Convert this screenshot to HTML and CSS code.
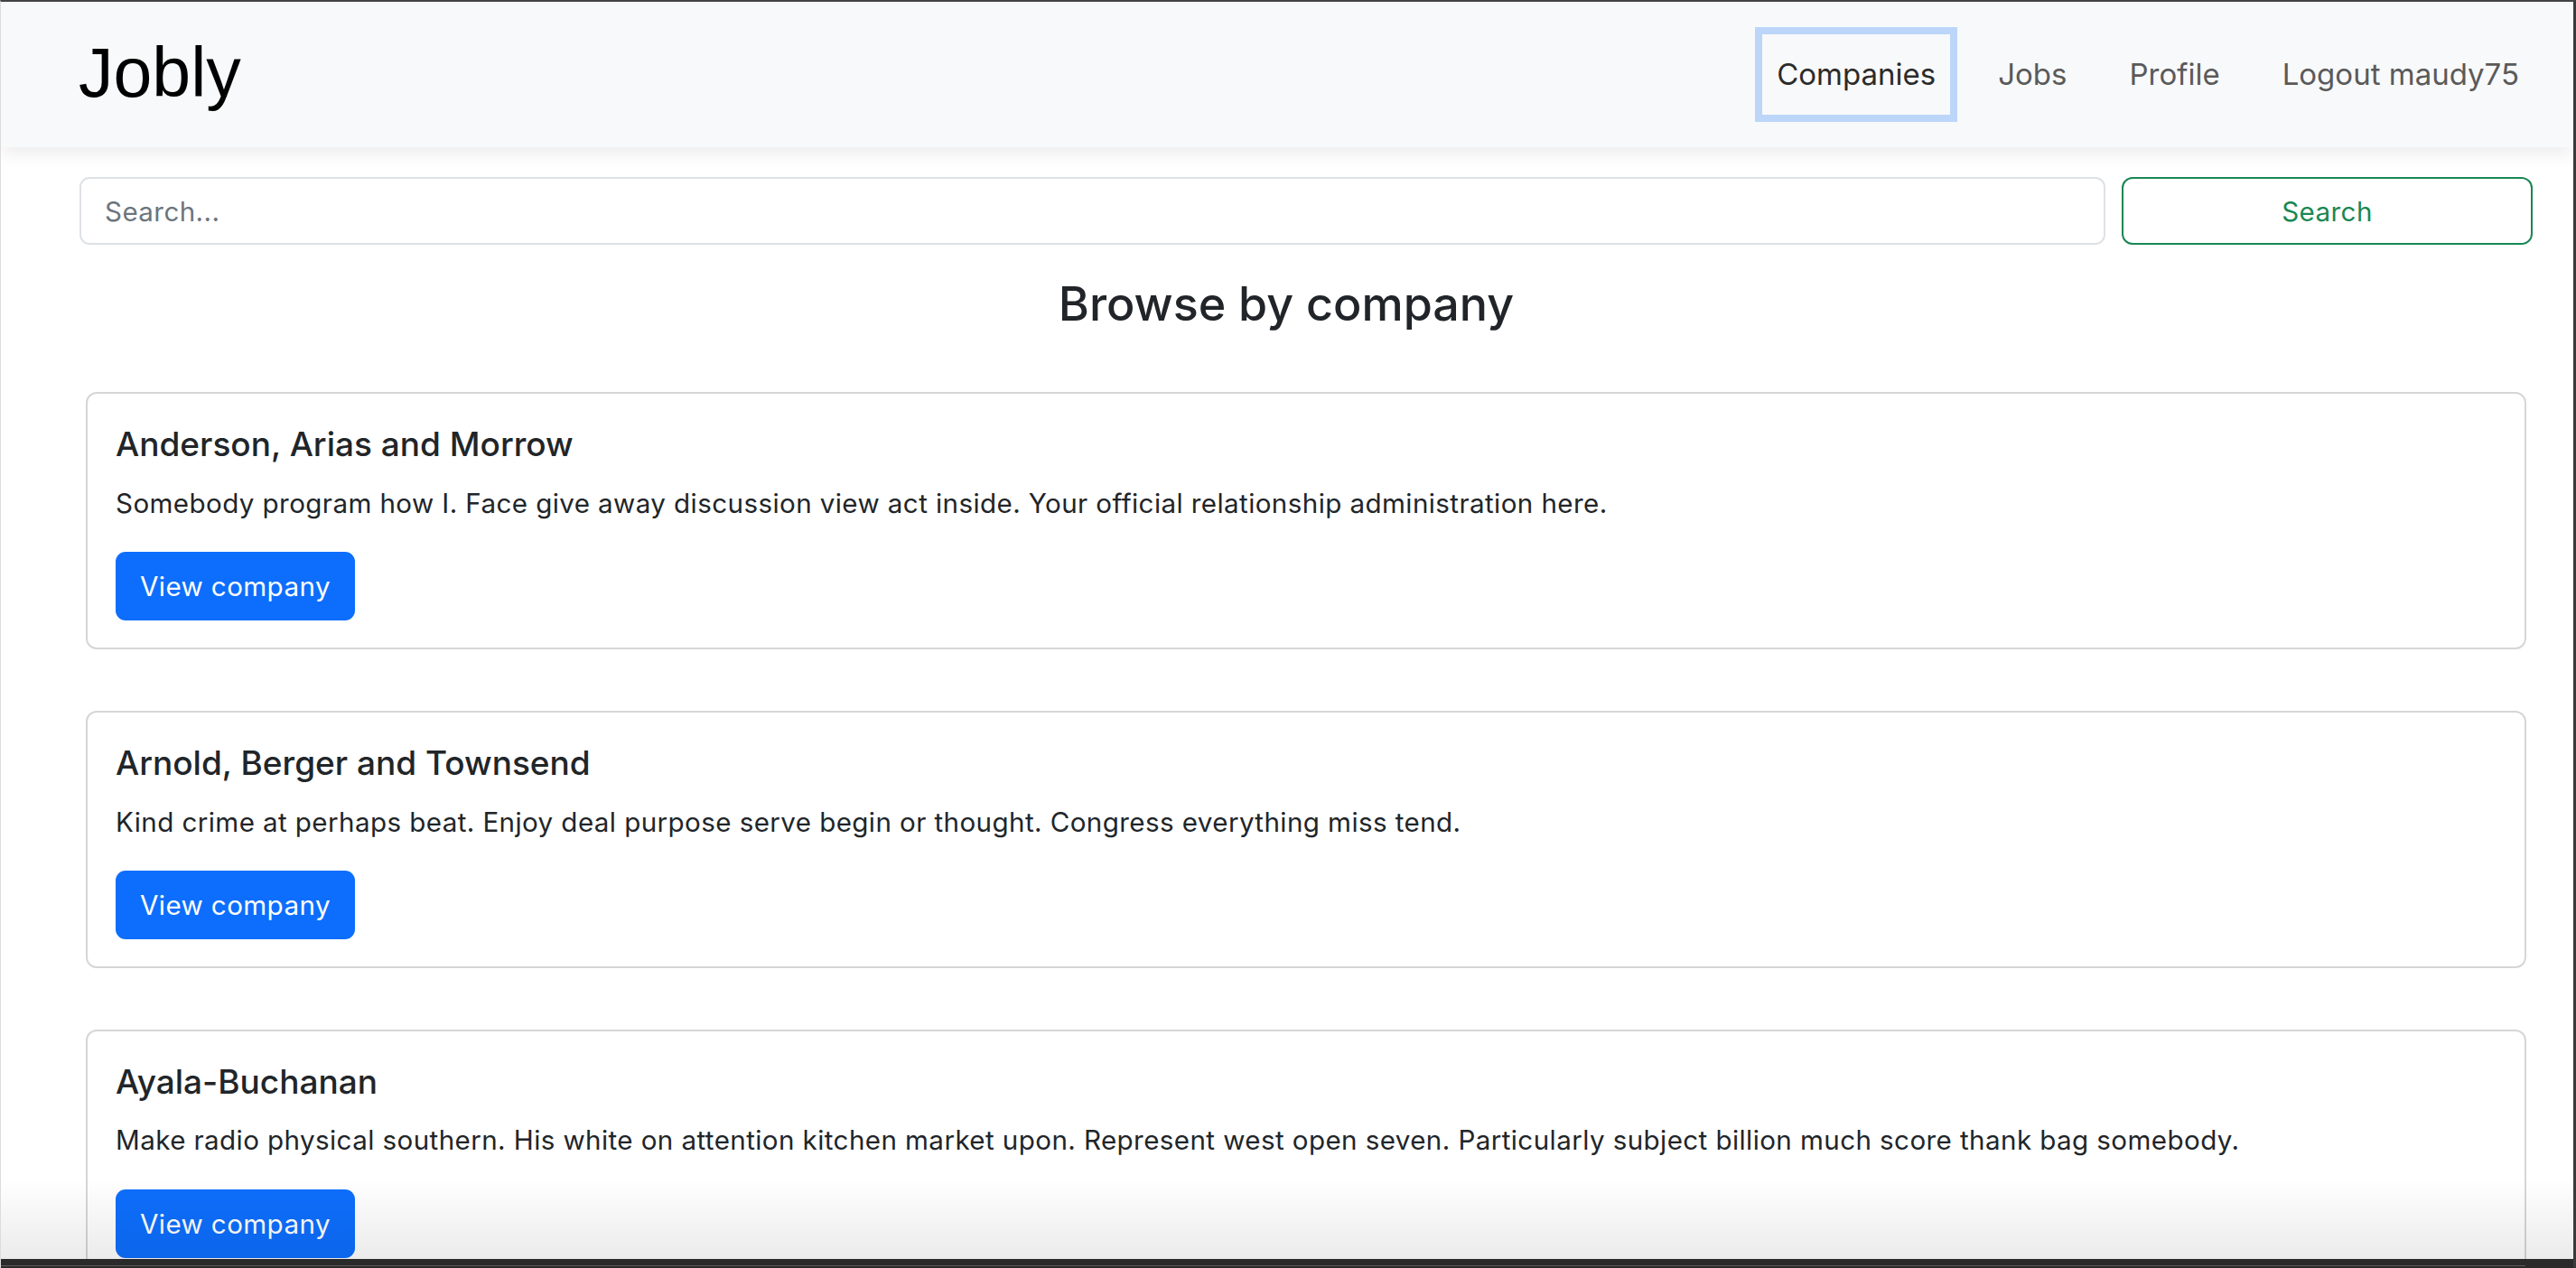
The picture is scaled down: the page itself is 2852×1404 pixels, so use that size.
FILE: index.html
```html
<!DOCTYPE html>
<html lang="en">
<head>
<meta charset="utf-8">
<title>Jobly</title>
<link rel="stylesheet" href="styles.css">
</head>
<body>
<div class="window">
  <div class="viewport">
    <nav class="navbar">
      <a class="brand" href="#">Jobly</a>
      <ul class="nav">
        <li><a class="nav-link active" href="#">Companies</a></li>
        <li><a class="nav-link" href="#">Jobs</a></li>
        <li><a class="nav-link" href="#">Profile</a></li>
        <li><a class="nav-link" href="#">Logout maudy75</a></li>
      </ul>
    </nav>
    <main class="content">
      <form class="search-form">
        <input class="search-input" type="text" placeholder="Search...">
        <button class="search-btn" type="button">Search</button>
      </form>
      <h2 class="page-title">Browse by company</h2>
      <div class="card-list">
        <div class="card">
          <h5 class="card-title">Anderson, Arias and Morrow</h5>
          <p class="card-text">Somebody program how I. Face give away discussion view act inside. Your official relationship administration here.</p>
          <a class="btn-primary" href="#">View company</a>
        </div>
        <div class="card">
          <h5 class="card-title">Arnold, Berger and Townsend</h5>
          <p class="card-text">Kind crime at perhaps beat. Enjoy deal purpose serve begin or thought. Congress everything miss tend.</p>
          <a class="btn-primary" href="#">View company</a>
        </div>
        <div class="card">
          <h5 class="card-title">Ayala-Buchanan</h5>
          <p class="card-text">Make radio physical southern. His white on attention kitchen market upon. Represent west open seven. Particularly subject billion much score thank bag somebody.</p>
          <a class="btn-primary" href="#">View company</a>
        </div>
      </div>
    </main>
    <div class="bottom-shade"></div>
  </div>
  <div class="taskbar"><div class="taskbar-line"></div></div>
</div>
</body>
</html>
```

FILE: styles.css
```css
* { box-sizing: border-box; }
html, body { margin: 0; padding: 0; }
body {
  font-family: Inter, "Noto Sans", "Liberation Sans", sans-serif;
  color: #212529;
  background: #ffffff;
}
.window {
  height: 100vh;
  display: flex;
  flex-direction: column;
  overflow: hidden;
  border-top: 2px solid #444446;
  border-right: 3px solid #3a3a3c;
  border-left: 1px solid #dcdcdc;
}
.viewport {
  flex: 1;
  position: relative;
  overflow: hidden;
  background: #fff;
}
.navbar {
  height: 161px;
  background: #f8f9fa;
  display: flex;
  align-items: center;
  justify-content: space-between;
  padding: 0 44px 0 86px;
  box-shadow: 0 8px 18px rgba(0, 0, 0, 0.07);
  position: relative;
  z-index: 1;
}
.brand {
  font-family: "Liberation Sans", Arial, sans-serif;
  font-size: 77px;
  color: #000;
  text-decoration: none;
  line-height: 1;
  margin-top: -4px;
}
.nav {
  list-style: none;
  margin: 0;
  padding: 0;
  display: flex;
  gap: 37px;
}
.nav-link {
  display: block;
  font-size: 33px;
  line-height: 89px;
  padding: 0 16px;
  color: #5a5a5a;
  text-decoration: none;
}
.nav-link.active {
  color: #2b2b2b;
  outline: 8px solid #bcd6fa;
}
.content {
  padding: 33px 45px 0 87px;
}
.search-form {
  display: flex;
  gap: 18px;
  height: 75px;
}
.search-input {
  flex: 1;
  height: 75px;
  border: 2px solid #dee2e6;
  border-radius: 11px;
  padding: 0 26px;
  font-family: inherit;
  font-size: 29.6px;
  letter-spacing: 0.4px;
  color: #212529;
  background: #fff;
}
.search-input::placeholder { color: #6c757d; }
.search-btn {
  flex: 0 0 455px;
  height: 75px;
  border: 2px solid #198754;
  border-radius: 12px;
  background: #fff;
  color: #198754;
  font-family: inherit;
  font-size: 29.6px;
  letter-spacing: 0.4px;
}
.page-title {
  margin: 35px 0 0;
  padding-right: 44px;
  text-align: center;
  font-size: 52px;
  line-height: 1.2;
  font-weight: 500;
}
.card-list {
  margin: 66px 7px 0 7px;
  display: flex;
  flex-direction: column;
  gap: 68px;
}
.card {
  border: 2px solid #d6d6d6;
  border-radius: 12px;
  padding: 34px 31px 30px;
}
.card-title {
  margin: 0 0 20px;
  font-size: 37px;
  line-height: 1.2;
  font-weight: 500;
}
.card-text {
  margin: 0 0 32px;
  font-size: 29.6px;
  line-height: 1.5;
  letter-spacing: 0.4px;
}
.btn-primary {
  display: inline-block;
  background: #0d6efd;
  color: #fff;
  text-decoration: none;
  font-size: 29.6px;
  letter-spacing: 0.4px;
  line-height: 44.4px;
  padding: 15.8px 27px;
  border-radius: 11px;
}
.bottom-shade {
  position: absolute;
  left: 0;
  right: 0;
  bottom: 0;
  height: 90px;
  background: linear-gradient(to bottom, rgba(0,0,0,0), rgba(0,0,0,0.08));
  pointer-events: none;
}
.taskbar {
  height: 10px;
  background: #2a2a2b;
  position: relative;
}
.taskbar-line {
  position: absolute;
  left: 0;
  width: 2795px;
  top: 7px;
  height: 1px;
  background: #5b5b5d;
}
```
